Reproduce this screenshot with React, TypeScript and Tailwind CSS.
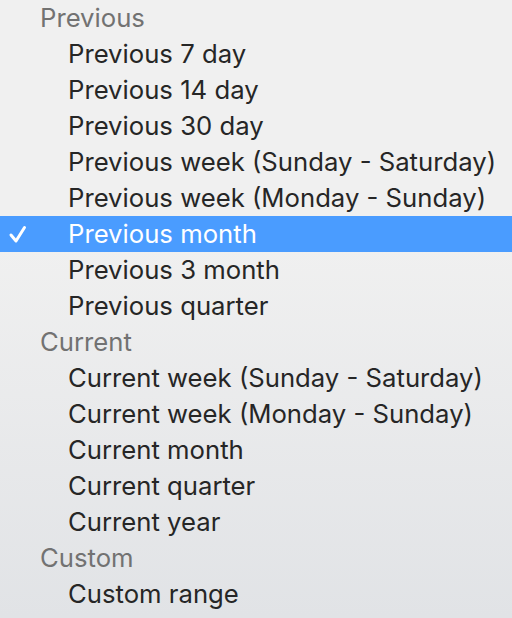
const groups = [
  {
    title: "Previous",
    items: [
      "Previous 7 day",
      "Previous 14 day",
      "Previous 30 day",
      "Previous week (Sunday - Saturday)",
      "Previous week (Monday - Sunday)",
      "Previous month",
      "Previous 3 month",
      "Previous quarter",
    ],
  },
  {
    title: "Current",
    items: [
      "Current week (Sunday - Saturday)",
      "Current week (Monday - Sunday)",
      "Current month",
      "Current quarter",
      "Current year",
    ],
  },
  {
    title: "Custom",
    items: ["Custom range"],
  },
]

const selected = "Previous month"

function Check() {
  return (
    <svg width="20" height="20" viewBox="0 0 20 20" className="absolute left-[8px] top-[8px]">
      <path d="M3 11 L8 17 L16.5 3.5" fill="none" stroke="white" strokeWidth="3" strokeLinecap="round" strokeLinejoin="round" />
    </svg>
  )
}

export default function App() {
  return (
    <div
      className="w-[512px] h-[618px] overflow-hidden bg-gradient-to-b from-[#f0f0f0] from-40% to-[#e1e3e6] text-[25.7px] leading-[36px]"
      style={{ fontFamily: "Inter, 'Liberation Sans', sans-serif" }}
    >
      {groups.map((g) => (
        <div key={g.title}>
          <div className="h-9 pl-10 text-[#727272]">{g.title}</div>
          {g.items.map((item) => {
            const active = item === selected
            return (
              <div
                key={item}
                className={
                  active
                    ? "relative h-9 pl-[68px] bg-[#4a9cff] text-white"
                    : "relative h-9 pl-[68px] text-[#262626]"
                }
              >
                {active && <Check />}
                {item}
              </div>
            )
          })}
        </div>
      ))}
    </div>
  )
}
